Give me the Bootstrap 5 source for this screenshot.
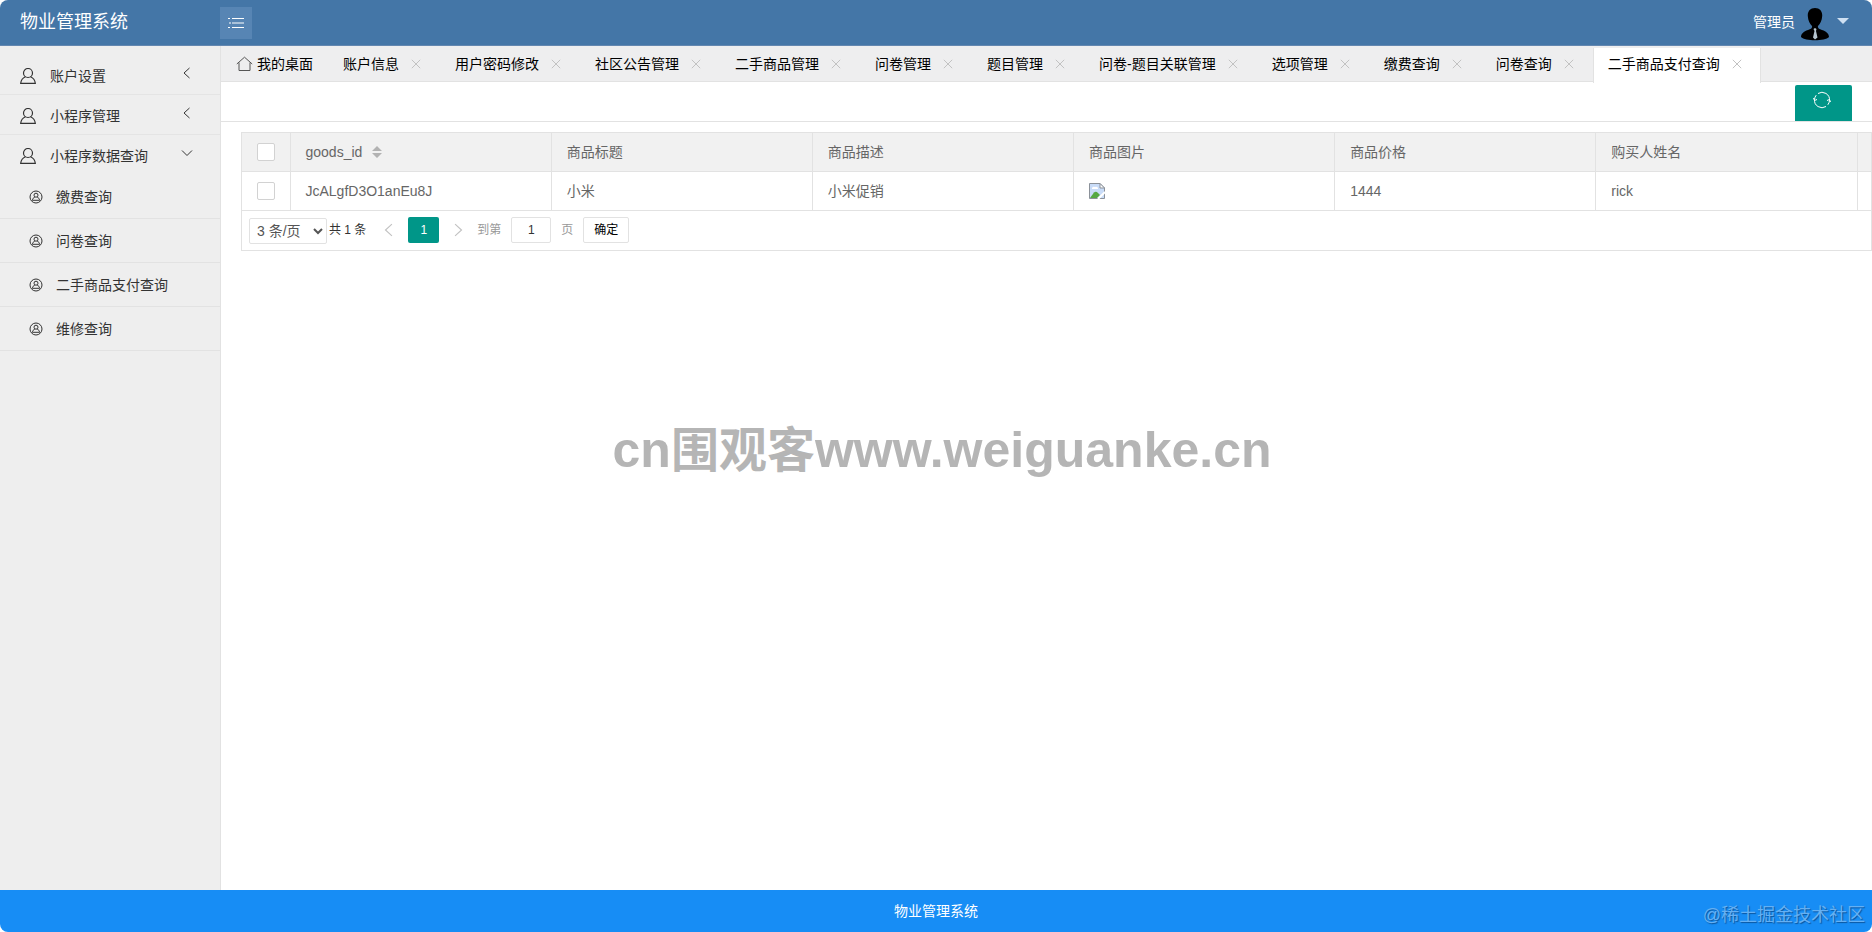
<!DOCTYPE html>
<html lang="zh-CN">
<head>
<meta charset="utf-8">
<meta name="viewport" content="width=device-width, initial-scale=1">
<title>物业管理系统</title>
<link href="https://cdn.jsdelivr.net/npm/bootstrap@5.3.0/dist/css/bootstrap.min.css" rel="stylesheet">
<style>
body{font:14px/20px "Liberation Sans","Noto Sans CJK SC",sans-serif;color:#333;background:#fff}
button,input,select{font-family:inherit}
svg{display:block;fill:none;stroke:currentColor}
.topbar{height:46px;background:#4476a7;border-radius:8px 8px 0 0;color:#fff;border-bottom:1px solid #6387b0}
.brand{width:220px;padding:0 20px 2px;font-size:18px;line-height:24px;color:#fff;text-decoration:none}
.toggle{width:32px;height:32px;background:#5785b4;border:0;color:#fff}
.user{padding:0 23px 2px 0}
.user svg{stroke:none;fill:#000}
.caret{border:6px solid transparent;border-top-color:#cfe0f2;border-bottom:0;margin:0 0 2px 6px}
.side{width:221px;background:#eee;border-right:1px solid #e2e2e2;padding-top:9px}
.side a,.tabs a{color:inherit;text-decoration:none}
.menu-a{height:40px;padding:2px 27px 0 20px;border-bottom:1px solid #e4e4e4}
.menu-a.open{border-bottom:0}
.menu-a .arrow{margin:0 0 6px auto}
.menu-a span{margin-left:14px}
.menu-b{height:44px;padding-left:29px;border-bottom:1px solid #e2e2e2}
.menu-b span{margin-left:13px}
.tabs{background:#eeeeef;height:36px;border-bottom:1px solid #e2e2e2;color:#000;padding-top:2px}
.tab{height:34px;padding:0 15px 2px}
.tab.on{background:#fff;height:35px;border:1px solid #e2e2e2;border-width:0 1px;padding:0 14px 3px}
.shut{width:18px;height:18px;margin-left:8px;border:0;padding:0;background:none;color:#c2c2c2;display:grid;place-items:center}
.tools{height:40px;border-bottom:1px solid #e2e2e2;padding:3px 20px 0 0}
.reload{width:57px;height:36px;background:#009688;border:0;border-radius:2px 2px 0 0;color:#fff;padding:6px 3px 0 0;display:flex;justify-content:center}
.sheet{margin:10px 0 0 20px;border:1px solid #e2e2e2;color:#666}
.sheet table{table-layout:fixed;width:100%;margin:0}
.sheet th,.sheet td{height:39px;padding:0 15px;border-right:1px solid #e2e2e2;border-bottom:1px solid #e2e2e2;font-weight:400;vertical-align:middle}
.sheet tr>:first-child{padding:0 15px}
.sheet tr>:last-child{border-right:0;padding:0}
.sheet th{background:#f1f1f1;height:38px}
.c-check{width:48px}.c-tail{width:14px}
.tick{appearance:none;display:block;width:18px;height:18px;border:1px solid #d2d2d2;border-radius:2px;background:#fff;margin:0}
.tick:checked{background:#009688}
.pager{height:39px;padding-left:7px;font-size:12px;color:#333}
.pager select{width:78px;height:26px;border:1px solid #e2e2e2;border-radius:2px;background:#fff;color:#555;font-size:14px;padding:0 0 0 3px;margin:2px 2px 0 0}
.pager .step{width:42px;height:26px;border:0;background:none;color:#c2c2c2;display:grid;place-items:center;padding:0}
.pager .step.next{width:38px}
.pager .now{width:31px;height:26px;border:0;border-radius:2px;background:#009688;color:#fff;padding:0}
.pager label{color:#999}
.pager input{width:40px;height:26px;border:1px solid #e2e2e2;border-radius:2px;text-align:center;color:#333;padding:0;margin:0 10px}
.pager .go{width:46px;height:26px;border:1px solid #e2e2e2;border-radius:2px;background:#fff;color:#000;padding:0;margin-left:10px}
.stamp{position:absolute;left:50%;top:450px;transform:translate(-50%,-50%);font-size:50px;line-height:60px;font-weight:700;color:#b5b5b5;white-space:nowrap;pointer-events:none;margin-left:6px}
.stamp span{font-size:48px}
.foot{height:42px;background:#178df5;color:#fff;border-radius:0 0 8px 8px;position:relative}
.credit{position:absolute;right:7px;bottom:5px;font-size:18px;line-height:24px;color:#65b0f3;text-shadow:1px 1px 1px #0a559c}
</style>
</head>
<body class="d-flex flex-column min-vh-100 position-relative">
<svg width="0" height="0" class="position-absolute" aria-hidden="true">
<symbol id="person" viewBox="1 1 16 16"><circle cx="9" cy="6" r="4.500" stroke-width="1.200"/><path stroke-width="1.200" d="M6.500 9.800C3.700 11 2 13.500 1.700 16.300H16.300C16 13.500 14.300 11 11.500 9.800"/></symbol>
<symbol id="badge-user" viewBox="0 0 14 14"><circle cx="7" cy="7" r="6"/><circle cx="7" cy="5.200" r="2"/><path d="M5.900 7C4.500 7.600 3.600 8.700 3.400 10.300H10.600C10.400 8.700 9.500 7.600 8.100 7"/></symbol>
<symbol id="left" viewBox="0 0 12 12"><path d="M8.500 1L3 6L8.500 11"/></symbol>
<symbol id="right" viewBox="0 0 12 12"><path d="M3.500 1L9 6L3.500 11"/></symbol>
<symbol id="down" viewBox="0 0 12 12"><path d="M1 3.500L6 8.500L11 3.500"/></symbol>
<symbol id="cross" viewBox="0 0 10 10"><path d="M.8.800L9.200 9.200M9.200.800L.8 9.200"/></symbol>
</svg>

<header class="topbar d-flex align-items-center">
<a class="brand" href="#">物业管理系统</a>
<button class="toggle d-grid p-0" style="place-items:center" aria-label="折叠菜单"><svg width="16" height="12"><path d="M0 1.500H2M4 1.500H16M1 6H3M4 6H16M0 10.500H2M4 10.500H16"/></svg></button>
<div class="user d-flex align-items-center ms-auto"><span>管理员</span>
<svg class="ms-1 mt-1" width="32" height="34" viewBox="0 0 32 34"><path d="M16 1C11 1 8.500 4.500 8.800 9C9 13.500 11 17 13 19C13.500 21 12 22 9 23C4.500 24.500 2 27 2 30C6 34.300 26 34.300 30 30C30 27 27.500 24.500 23 23C20 22 18.500 21 19 19C21 17 23 13.500 23.200 9C23.500 4.500 21 1 16 1Z"/><path fill="#b6c5cf" d="M14.500 22L16 21L17.500 22L17 24L18.500 30.500L16 32.500L14 30.500L15.500 24Z"/></svg>
<span class="caret"></span></div>
</header>

<div class="d-flex flex-grow-1">
<nav class="side flex-shrink-0" aria-label="主菜单">
<a class="menu-a d-flex align-items-center" href="#"><svg width="16" height="16"><use href="#person"/></svg><span>账户设置</span><svg class="arrow" width="12" height="12"><use href="#left"/></svg></a>
<a class="menu-a d-flex align-items-center" href="#"><svg width="16" height="16"><use href="#person"/></svg><span>小程序管理</span><svg class="arrow" width="12" height="12"><use href="#left"/></svg></a>
<a class="menu-a open d-flex align-items-center" href="#"><svg width="16" height="16"><use href="#person"/></svg><span>小程序数据查询</span><svg class="arrow" width="12" height="12"><use href="#down"/></svg></a>
<a class="menu-b d-flex align-items-center" href="#"><svg width="14" height="14"><use href="#badge-user"/></svg><span>缴费查询</span></a>
<a class="menu-b d-flex align-items-center" href="#"><svg width="14" height="14"><use href="#badge-user"/></svg><span>问卷查询</span></a>
<a class="menu-b d-flex align-items-center" href="#"><svg width="14" height="14"><use href="#badge-user"/></svg><span>二手商品支付查询</span></a>
<a class="menu-b d-flex align-items-center" href="#"><svg width="14" height="14"><use href="#badge-user"/></svg><span>维修查询</span></a>
</nav>

<main class="flex-grow-1" style="min-width:0">
<div class="tabs d-flex text-nowrap">
<div class="tab d-flex align-items-center"><svg class="me-1" width="17" height="16"><path stroke="#555" d="M.8 8L8.500 1.200L16.200 8M3 6.500V14.500H14V6.500"/></svg><a href="#">我的桌面</a></div>
<div class="tab d-flex align-items-center"><a href="#">账户信息</a><button class="shut" aria-label="关闭"><svg width="10" height="10"><use href="#cross"/></svg></button></div>
<div class="tab d-flex align-items-center"><a href="#">用户密码修改</a><button class="shut" aria-label="关闭"><svg width="10" height="10"><use href="#cross"/></svg></button></div>
<div class="tab d-flex align-items-center"><a href="#">社区公告管理</a><button class="shut" aria-label="关闭"><svg width="10" height="10"><use href="#cross"/></svg></button></div>
<div class="tab d-flex align-items-center"><a href="#">二手商品管理</a><button class="shut" aria-label="关闭"><svg width="10" height="10"><use href="#cross"/></svg></button></div>
<div class="tab d-flex align-items-center"><a href="#">问卷管理</a><button class="shut" aria-label="关闭"><svg width="10" height="10"><use href="#cross"/></svg></button></div>
<div class="tab d-flex align-items-center"><a href="#">题目管理</a><button class="shut" aria-label="关闭"><svg width="10" height="10"><use href="#cross"/></svg></button></div>
<div class="tab d-flex align-items-center"><a href="#">问卷-题目关联管理</a><button class="shut" aria-label="关闭"><svg width="10" height="10"><use href="#cross"/></svg></button></div>
<div class="tab d-flex align-items-center"><a href="#">选项管理</a><button class="shut" aria-label="关闭"><svg width="10" height="10"><use href="#cross"/></svg></button></div>
<div class="tab d-flex align-items-center"><a href="#">缴费查询</a><button class="shut" aria-label="关闭"><svg width="10" height="10"><use href="#cross"/></svg></button></div>
<div class="tab d-flex align-items-center"><a href="#">问卷查询</a><button class="shut" aria-label="关闭"><svg width="10" height="10"><use href="#cross"/></svg></button></div>
<div class="tab on d-flex align-items-center"><a href="#">二手商品支付查询</a><button class="shut" aria-label="关闭"><svg width="10" height="10"><use href="#cross"/></svg></button></div>
</div>

<div class="tools d-flex justify-content-end"><button class="reload" aria-label="刷新"><svg width="18" height="18" viewBox="0 0 18 18"><path d="M5 2.500A7.500 7.500 0 0 1 16.500 9.500M13 15.500A7.500 7.500 0 0 1 1.500 8.500M3.200 4.200A7.500 7.500 0 0 0 1.500 8.500M14.800 13.800A7.500 7.500 0 0 0 16.500 9.500M.5 7L1.500 9.500L4 8.500M17.500 11L16.500 8.500L14 9.500"/></svg></button></div>

<div class="sheet">
<table>
<colgroup><col class="c-check"><col><col><col><col><col><col><col class="c-tail"></colgroup>
<thead><tr><th><input class="tick" type="checkbox" aria-label="全选"></th>
<th><span class="d-flex align-items-center">goods_id<svg class="ms-2" width="14" height="12" aria-hidden="true"><path fill="#b2b2b2" stroke="none" d="M2 5L7 0L12 5ZM2 7L7 12L12 7Z"/></svg></span></th>
<th>商品标题</th><th>商品描述</th><th>商品图片</th><th>商品价格</th><th>购买人姓名</th><th></th></tr></thead>
<tbody><tr><td><input class="tick" type="checkbox" aria-label="选择此行"></td><td>JcALgfD3O1anEu8J</td><td>小米</td><td>小米促销</td>
<td><svg width="16" height="16" role="img" aria-label="商品图片"><path fill="#c9dcf8" stroke="#8b9199" d="M.5.500H11L15.500 5V15.500H.5Z"/><path fill="#fff" stroke="#8b9199" d="M11 .5V5H15.500Z"/><path fill="#fff" stroke="none" d="M3 6A2 2 0 0 1 6 4A2 2 0 0 1 9 6Z"/><path fill="#56a843" stroke="none" d="M1 15L5 9.500Q7 8 9 10L11 12L8 15Z"/><path stroke="#fff" stroke-width="2" d="M9 16L16 9"/></svg></td>
<td>1444</td><td>rick</td><td></td></tr></tbody>
</table>
<div class="pager d-flex align-items-center">
<select aria-label="每页条数"><option>3 条/页</option><option>10 条/页</option></select>
<span>共 1 条</span>
<button class="step" aria-label="上一页"><svg class="ms-1" width="14" height="14"><use href="#left"/></svg></button>
<button class="now">1</button>
<button class="step next" aria-label="下一页"><svg width="14" height="14"><use href="#right"/></svg></button>
<label for="page">到第</label><input id="page" type="text" value="1"><label for="page">页</label>
<button class="go">确定</button>
</div>
</div>
</main>
</div>

<footer class="foot d-flex align-items-center justify-content-center"><span>物业管理系统</span><span class="credit">@稀土掘金技术社区</span></footer>
<div class="stamp">cn<span>围观客</span>www.weiguanke.cn</div>
<script src="https://cdn.jsdelivr.net/npm/bootstrap@5.3.0/dist/js/bootstrap.bundle.min.js"></script>
</body>
</html>
